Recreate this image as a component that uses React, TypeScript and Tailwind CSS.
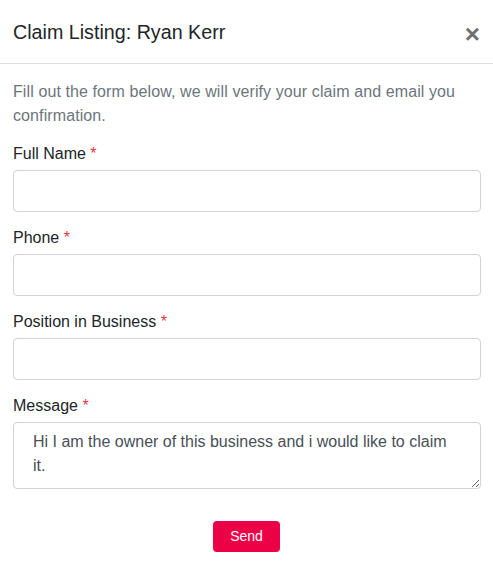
import React from "react";

const font = { fontFamily: '"Liberation Sans", Arial, sans-serif' };

function Field({ label, area }: { label: string; area?: boolean }) {
  return (
    <div className="mb-[14px]">
      <label className="block text-[16px] leading-[24px] text-[#212529] mb-[4px]">
        {label} <span className="text-[#dc3545]">*</span>
      </label>
      {area ? (
        <textarea
          className="block w-full h-[67px] rounded-[4px] border border-[#ced4da] px-[19px] py-[7px] text-[16px] leading-[24px] text-[#495057] outline-none"
          style={font}
          defaultValue="Hi I am the owner of this business and i would like to claim it."
        />
      ) : (
        <input
          className="block w-full h-[42px] rounded-[4px] border border-[#ced4da] px-3 text-[16px] outline-none"
          style={font}
        />
      )}
    </div>
  );
}

export default function App() {
  return (
    <div className="w-[493px] h-[565px] bg-white" style={font}>
      <div className="flex items-center justify-between h-[64px] border-b border-[#dee2e6] pl-[13px] pr-[13px]">
        <h5 className="text-[19.7px] leading-[24px] text-[#212529] pt-[1px]">Claim Listing: Ryan Kerr</h5>
        <span className="text-[26px] font-bold text-[#707070] leading-none mt-[4px]">×</span>
      </div>
      <div className="pl-[13px] pr-[12px] pt-[16px]">
        <p className="text-[16px] leading-[24px] text-[#6c757d] mb-[14px] tracking-[0.1px]">
          Fill out the form below, we will verify your claim and email you confirmation.
        </p>
        <Field label="Full Name" />
        <Field label="Phone" />
        <Field label="Position in Business" />
        <Field label="Message" area />
        <div className="flex justify-center pt-[18px] pr-[1px]">
          <button className="w-[67px] h-[31px] rounded-[4px] bg-[#ec0046] text-white text-[14px]">Send</button>
        </div>
      </div>
    </div>
  );
}
